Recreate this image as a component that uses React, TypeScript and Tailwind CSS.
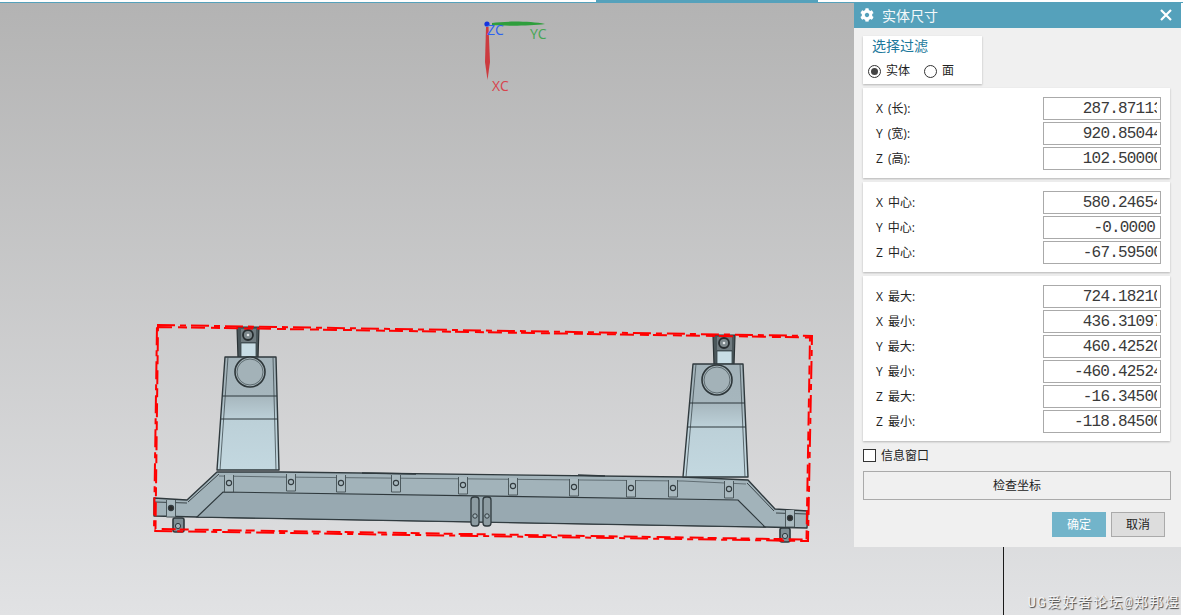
import { FaCog } from "react-icons/fa";

const ui = "font-['Open_Sans','Noto_Sans_CJK_SC',sans-serif]";

type Row = { label: string; value: string; clipped: boolean };

const sizeRows: Row[] = [
  { label: "X (长):", value: "287.87113", clipped: true },
  { label: "Y (宽):", value: "920.85044", clipped: true },
  { label: "Z (高):", value: "102.50000", clipped: true },
];

const centerRows: Row[] = [
  { label: "X 中心:", value: "580.24654", clipped: true },
  { label: "Y 中心:", value: "-0.0000", clipped: false },
  { label: "Z 中心:", value: "-67.59500", clipped: true },
];

const rangeRows: Row[] = [
  { label: "X 最大:", value: "724.18210", clipped: true },
  { label: "X 最小:", value: "436.31097", clipped: true },
  { label: "Y 最大:", value: "460.42520", clipped: true },
  { label: "Y 最小:", value: "-460.42524", clipped: true },
  { label: "Z 最大:", value: "-16.34500", clipped: true },
  { label: "Z 最小:", value: "-118.84500", clipped: true },
];

function ValuePanel({ rows }: { rows: Row[] }) {
  return (
    <div className="flex w-[307px] flex-col gap-[2px] bg-white pt-[9px] pb-[8px] pr-[9px] pl-[13px] shadow-[0_1px_2px_rgba(0,0,0,0.25)]">
      {rows.map((r) => (
        <div key={r.label} className="flex h-[23px] items-center justify-between">
          <span className="text-[12px] text-[#222] [word-spacing:2px]">{r.label}</span>
          <div className="h-[23px] w-[118px] border border-[#aaa] bg-white pr-[3px] pl-[3px]">
            <div className="flex h-full items-center justify-end overflow-hidden">
              <span
                className={`shrink-0 whitespace-pre font-['Liberation_Mono',monospace] text-[16px] tracking-[-0.8px] text-[#3a3a3a] ${
                  r.clipped ? "mr-[-5px]" : "mr-[2px]"
                }`}
              >
                {r.value}
              </span>
            </div>
          </div>
        </div>
      ))}
    </div>
  );
}

function Tab({ x, y, dark }: { x: number; y: number; dark?: boolean }) {
  return (
    <g>
      <path d={`M${x - 4.5} ${y - 8} V${y + 9} H${x + 4.5} V${y - 8}`} fill="#a9b9bf" stroke="#434f54" strokeWidth="0.9" />
      <circle cx={x} cy={y} r="2.6" fill={dark ? "#2b2b2b" : "#a9b9bf"} stroke="#333c40" strokeWidth="1.1" />
    </g>
  );
}

function Pedestal({
  top,
  bottom,
  line1,
  line2,
  tl,
  tr,
  bl,
  br,
  cx,
  cy,
  clampX,
  clampY,
  id,
}: {
  top: number;
  bottom: number;
  line1: number;
  line2: number;
  tl: number;
  tr: number;
  bl: number;
  br: number;
  cx: number;
  cy: number;
  clampX: number;
  clampY: number;
  id: string;
}) {
  const at = (y: number, a: number, b: number) => a + ((b - a) * (y - top)) / (bottom - top);
  return (
    <g>
      {/* clamp on top */}
      <path
        d={`M${clampX} ${clampY} h22 l-1 ${top - clampY + 1} h-20 z`}
        fill="#4b575b"
        stroke="#2a3235"
        strokeWidth="1.2"
      />
      <rect x={clampX + 4} y={clampY + 16} width="15" height={top - clampY - 16} fill="#c8dde5" stroke="#39464a" strokeWidth="0.8" />
      <rect x={clampX + 4} y={clampY + 2} width="15" height="13" fill="#6f7b80" />
      <circle cx={clampX + 11} cy={clampY + 8} r="5" fill="#7d888c" stroke="#262c2f" strokeWidth="1.8" />
      <circle cx={clampX + 11} cy={clampY + 8} r="1.3" fill="#e4e8ea" />

      {/* body */}
      <path
        d={`M${tl} ${top} H${tr} L${br} ${bottom} H${bl} Z`}
        fill={`url(#${id})`}
        stroke="#2f393d"
        strokeWidth="1.4"
        strokeLinejoin="round"
      />
      <path
        d={`M${tl + 3} ${top} L${bl + 3} ${bottom} M${tr - 3} ${top} L${br - 3} ${bottom}`}
        stroke="#3f4b50"
        strokeWidth="0.8"
        fill="none"
      />
      <line x1={at(line1, tl, bl)} y1={line1} x2={at(line1, tr, br)} y2={line1} stroke="#2f393d" strokeWidth="1" />
      <line x1={at(line2, tl, bl)} y1={line2} x2={at(line2, tr, br)} y2={line2} stroke="#2f393d" strokeWidth="1" />
      <circle cx={cx} cy={cy} r="15" fill="#a3b2b8" stroke="#2e373a" strokeWidth="1.6" />
      <circle cx={cx} cy={cy} r="13" fill="none" stroke="#566368" strokeWidth="0.9" />
    </g>
  );
}

function Viewport() {
  return (
    <svg className="absolute top-[-3px] left-0" width="1181" height="615" viewBox="0 0 1181 615">
      <defs>
        <linearGradient id="pedA" x1="0" y1="357" x2="0" y2="470" gradientUnits="userSpaceOnUse">
          <stop offset="0" stopColor="#a3b3ba" />
          <stop offset="0.34" stopColor="#a6b6bd" />
          <stop offset="0.55" stopColor="#bcd0d8" />
          <stop offset="1" stopColor="#c3d8e0" />
        </linearGradient>
        <linearGradient id="pedB" x1="0" y1="364" x2="0" y2="477" gradientUnits="userSpaceOnUse">
          <stop offset="0" stopColor="#a3b3ba" />
          <stop offset="0.34" stopColor="#a6b6bd" />
          <stop offset="0.55" stopColor="#bcd0d8" />
          <stop offset="1" stopColor="#c3d8e0" />
        </linearGradient>
      </defs>

      {/* work coordinate axes */}
      <path d="M492 23 C505 21 530 21 545 24 C530 26 505 26 492 25 Z" fill="#2f9e3c" />
      <path d="M486 27 L488.5 27 L490 62 L487.5 80 L485 62 Z" fill="#cc3b3f" />
      <circle cx="487" cy="24" r="2.6" fill="#1433e0" />
      <text x="487" y="35" fontFamily="Open Sans, sans-serif" fontSize="14" fill="#2b62f0">ZC</text>
      <text x="530" y="39" fontFamily="Open Sans, sans-serif" fontSize="14" fill="#45a653">YC</text>
      <text x="492" y="91" fontFamily="Open Sans, sans-serif" fontSize="14" fill="#d8434c">XC</text>

      {/* base beam */}
      <path
        d="M154 498 L187 500 L217 472 L280 472 L683 477 L748 480 L775 509 L808 511 L807 528 L765 527 L197 517 L154 516 Z"
        fill="#a2b3ba"
        stroke="#2f393d"
        strokeWidth="1.4"
        strokeLinejoin="round"
      />
      <path d="M223 492 L738 500 L765 527 L197 517 Z" fill="#98a9b1" stroke="#2f393d" strokeWidth="1.2" />
      <path d="M219 476 L280 477 L683 481 L746 484" fill="none" stroke="#4f5c61" strokeWidth="0.8" />
      <path d="M188 502 L219 474 M747 483 L774 511 M155 502 L187 503 M776 513 L807 514" fill="none" stroke="#3a4448" strokeWidth="1" />
      <path d="M362 473 L416 474 M578 475 L605 476" stroke="#2f393d" strokeWidth="1.4" />

      <Pedestal id="pedA" top={357} bottom={470} line1={396} line2={419} tl={225} tr={276} bl={217} br={279} cx={250} cy={372} clampX={237} clampY={327} />
      <Pedestal id="pedB" top={364} bottom={477} line1={403} line2={427} tl={693} tr={743} bl={683} br={748} cx={717} cy={380} clampX={713} clampY={335} />

      {[
        [229, 483],
        [291, 482],
        [341, 483],
        [396, 483],
        [463, 485],
        [513, 486],
        [574, 487],
        [631, 488],
        [673, 488],
        [729, 489],
      ].map(([x, y]) => (
        <Tab key={x} x={x} y={y} />
      ))}
      <Tab x={171} y={508} dark />
      <Tab x={790} y={518} dark />

      {/* lugs */}
      <rect x="173" y="518" width="11" height="14" rx="2" fill="#7f8e94" stroke="#2f393d" strokeWidth="1.6" />
      <circle cx="178" cy="526" r="2.6" fill="#a2b3ba" stroke="#2f393d" />
      <rect x="780" y="528" width="10" height="14" rx="2" fill="#7f8e94" stroke="#2f393d" strokeWidth="1.6" />
      <circle cx="785" cy="536" r="2.6" fill="#a2b3ba" stroke="#2f393d" />
      <rect x="471" y="497" width="8" height="29" rx="3" fill="#8d9ca2" stroke="#2f393d" strokeWidth="1.3" />
      <rect x="483" y="497" width="8" height="29" rx="3" fill="#8d9ca2" stroke="#2f393d" strokeWidth="1.3" />
      <circle cx="475" cy="516" r="2.2" fill="#a2b3ba" stroke="#2f393d" />
      <circle cx="487" cy="516" r="2.2" fill="#a2b3ba" stroke="#2f393d" />

      {/* bounding box */}
      <g fill="none" stroke="#ff0000" strokeWidth="2">
        <path d="M157 325 L812 336 L808 541 L154 531 Z" strokeDasharray="18 5 6 5" />
        <path d="M158 327 L810 337.5 L806.5 539.5 L155.5 529 Z" strokeDasharray="14 6 9 4" />
      </g>
    </svg>
  );
}

function Dialog() {
  return (
    <div className={`absolute top-[-1px] left-[854px] flex w-[327px] flex-col bg-[#f0f0f0] ${ui}`}>
      <div className="flex h-[26px] items-center bg-[#55a1bb] pr-[9px] pl-[6px] text-white">
        <FaCog className="h-[14px] w-[14px]" />
        <span className="ml-[8px] text-[14px] text-[#f3f8fa]">实体尺寸</span>
        <svg className="ml-auto" width="12" height="12" viewBox="0 0 12 12" stroke="white" strokeWidth="2.2">
          <path d="M1 1 L11 11 M11 1 L1 11" />
        </svg>
      </div>

      <div className="flex flex-col pt-[8px] pl-[9px]">
        <div className="h-[48px] w-[119px] bg-white pl-[5px] shadow-[0_1px_2px_rgba(0,0,0,0.25)]">
          <div className="pl-[4px] text-[14px] leading-[20px] text-[#20789b]">选择过滤</div>
          <div className="mt-[6px] flex items-center text-[12px] text-[#222]">
            <span className="flex h-[13px] w-[13px] items-center justify-center rounded-full border border-[#333]">
              <span className="h-[7px] w-[7px] rounded-full bg-[#444]" />
            </span>
            <span className="ml-[5px]">实体</span>
            <span className="ml-[14px] h-[13px] w-[13px] rounded-full border border-[#333]" />
            <span className="ml-[5px]">面</span>
          </div>
        </div>

        <div className="mt-[4px] flex flex-col gap-[4px]">
          <ValuePanel rows={sizeRows} />
          <ValuePanel rows={centerRows} />
          <ValuePanel rows={rangeRows} />
        </div>

        <div className="mt-[8px] flex h-[13px] items-center text-[12px] text-[#222]">
          <span className="h-[13px] w-[13px] border border-[#333] bg-white" />
          <span className="ml-[5px]">信息窗口</span>
        </div>

        <button className="mt-[9px] h-[29px] w-[308px] border border-[#aaa] bg-[#f0f0f0] text-[12px] text-[#222]">
          检查坐标
        </button>

        <div className="mt-[12px] mb-[10px] flex gap-[5px] pl-[189px]">
          <button className="h-[25px] w-[54px] bg-[#72b4ca] text-[12px] text-white">确定</button>
          <button className="h-[25px] w-[54px] border border-[#aaa] bg-[#ddd] text-[12px] text-[#222]">取消</button>
        </div>
      </div>
    </div>
  );
}

export default function App() {
  return (
    <div className="flex h-[615px] w-full flex-col overflow-hidden bg-white">
      <div className="flex h-[3px] items-end">
        <div className="h-px w-[596px] bg-[#55a1bb]" />
        <div className="h-[3px] w-[222px] bg-[#55a1bb]" />
        <div className="h-px flex-1 bg-[#55a1bb]" />
      </div>
      <div className="relative w-[1181px] flex-1 bg-[linear-gradient(180deg,#b3b3b3_0%,#e1e2e4_100%)]">
        <Viewport />
        <Dialog />
        <div className="absolute top-[544px] left-[1003px] h-[68px] w-px bg-[#1a1a1a]" />
        <div className="absolute right-[1px] bottom-[1px] font-['Liberation_Mono','Noto_Sans_CJK_SC',monospace] text-[14px] tracking-[1.4px] whitespace-nowrap text-[#f4f4f4] [text-shadow:1px_1px_1px_#444]">
          UG爱好者论坛@郑邦煜
        </div>
      </div>
    </div>
  );
}
